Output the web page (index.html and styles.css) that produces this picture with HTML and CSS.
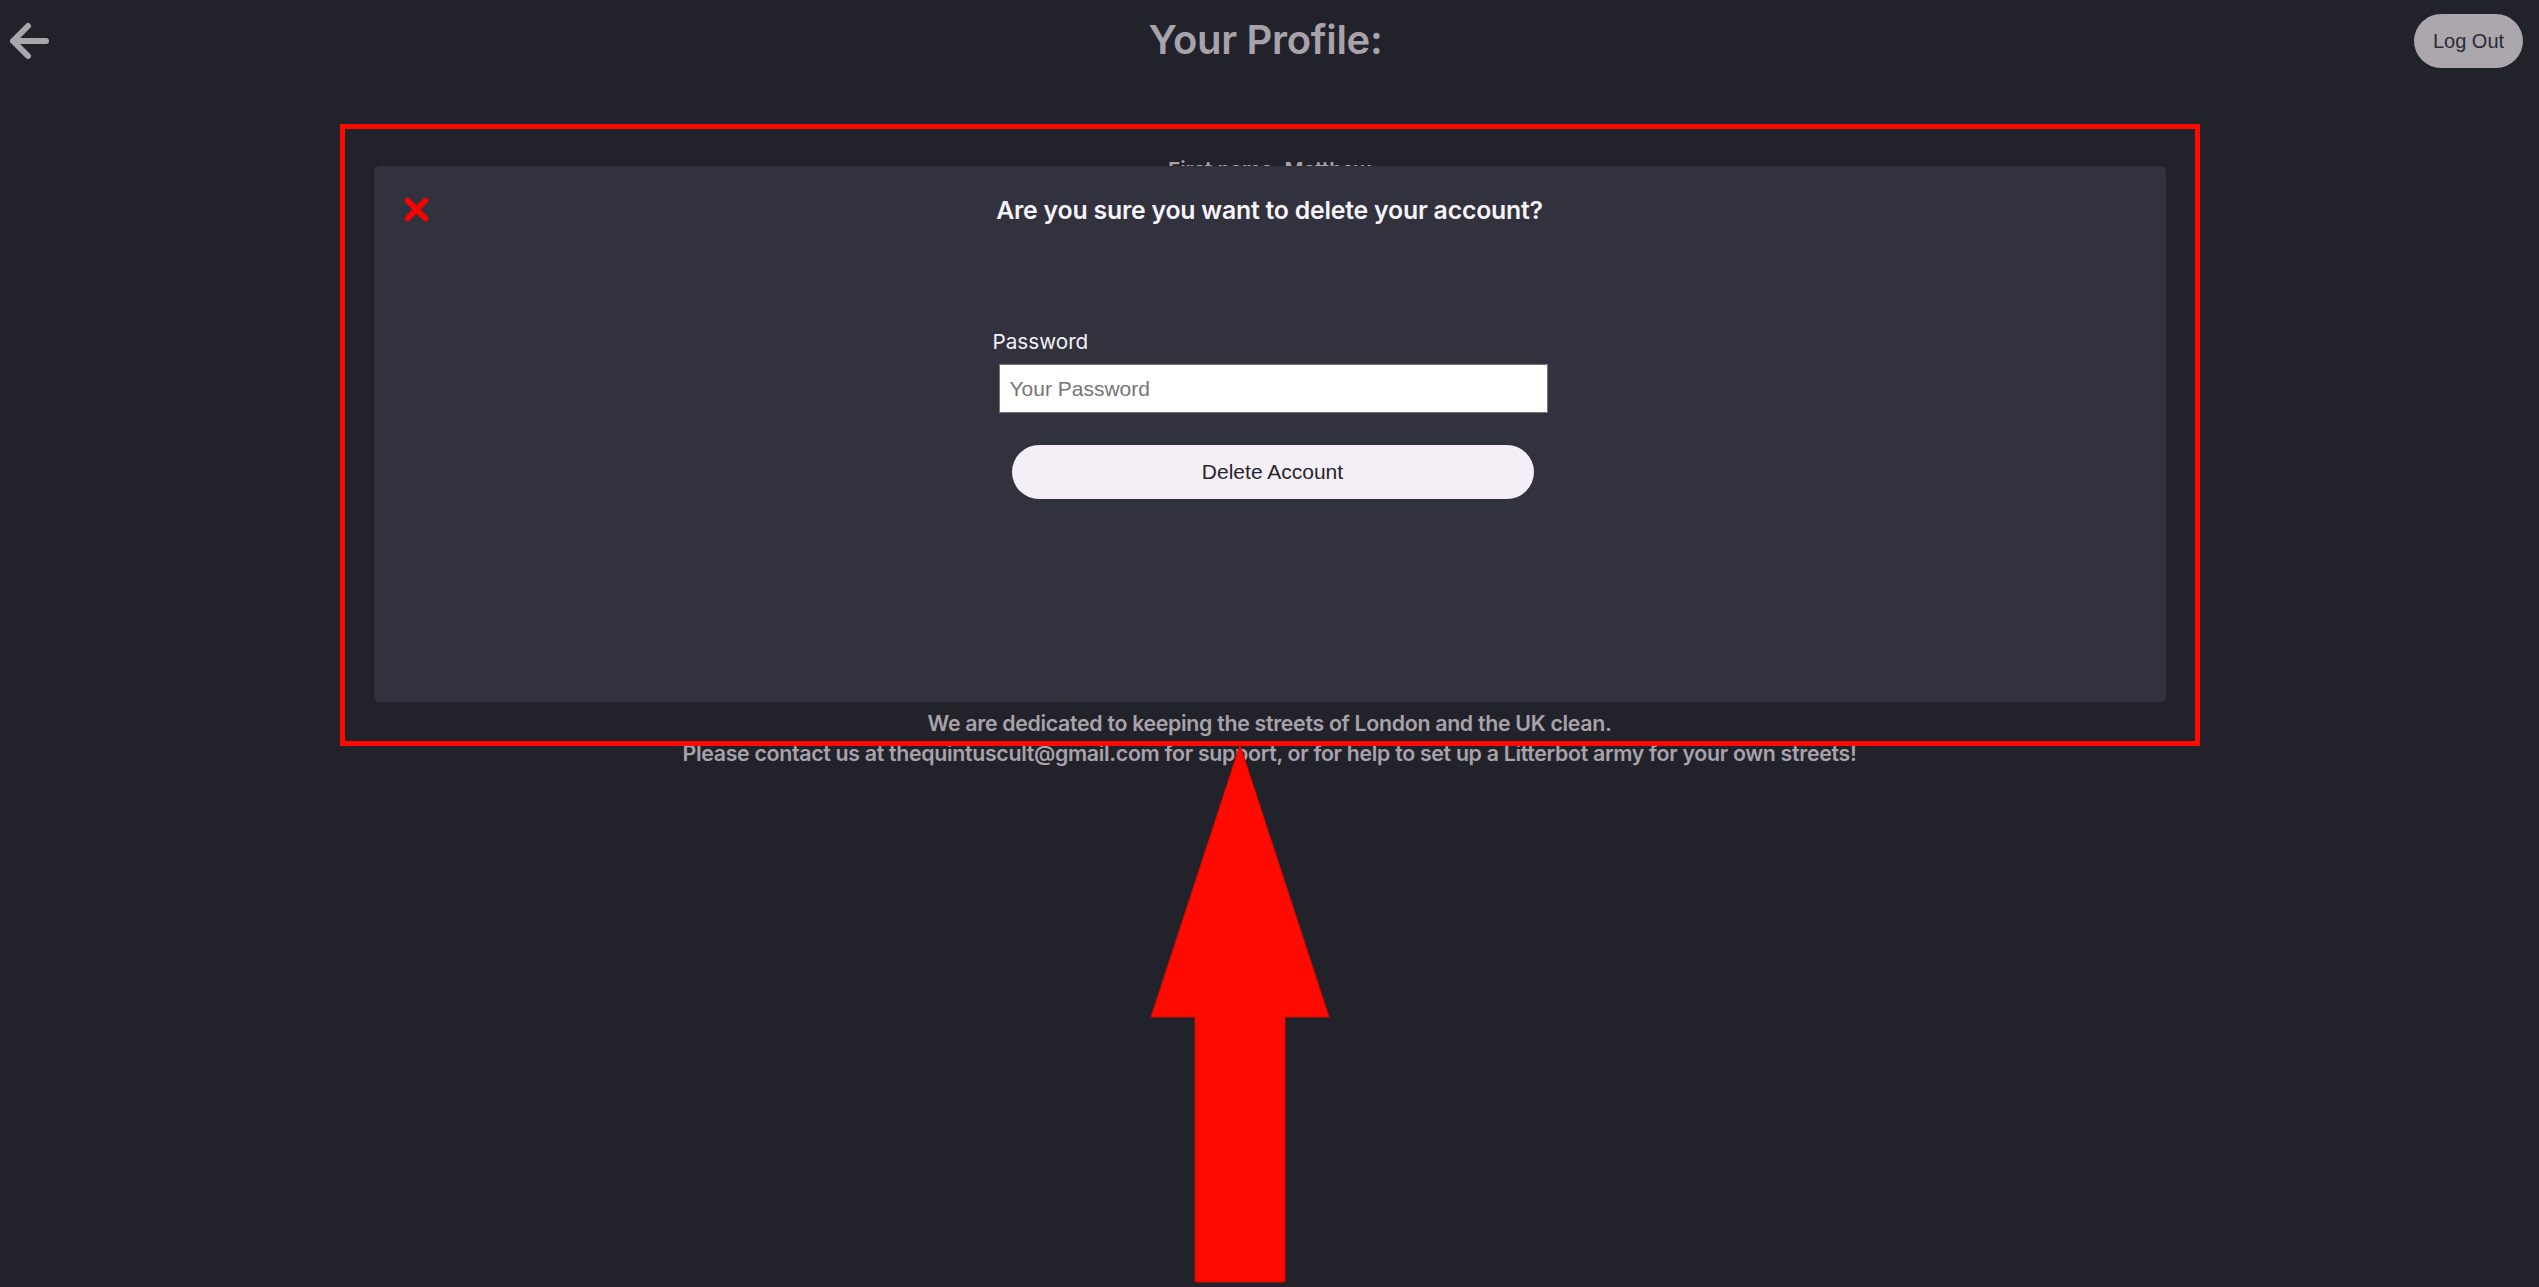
FILE: index.html
```html
<!DOCTYPE html>
<html lang="en">
<head>
<meta charset="utf-8">
<title>Your Profile</title>
<link rel="stylesheet" href="styles.css">
</head>
<body>
  <header class="topbar">
    <a class="back" href="#" aria-label="Back">
      <svg width="42" height="42" viewBox="0 0 42 42"><path d="M38 21 H5 M20 6 L5 21 L20 36" fill="none" stroke="#aba6ac" stroke-width="6" stroke-linecap="round" stroke-linejoin="round"/></svg>
    </a>
    <h1 class="title">Your Profile:</h1>
    <div class="actions"><button class="logout">Log Out</button></div>
  </header>

  <main class="profile">
    <p class="field">First name: Matthew</p>

    <section class="modal">
      <button class="close" aria-label="Close">
        <svg width="25" height="25" viewBox="0 0 25 25"><path d="M3.5 3.5 L21.5 21.5 M21.5 3.5 L3.5 21.5" stroke="#ff0000" stroke-width="5.5" stroke-linecap="round"/></svg>
      </button>
      <h2 class="modal-title">Are you sure you want to delete your account?</h2>
      <form class="delete-form">
        <label class="label" for="pw">Password</label>
        <input class="input" id="pw" type="password" placeholder="Your Password">
        <button class="delete" type="button">Delete Account</button>
      </form>
    </section>
  </main>

  <footer class="footer">
    <p>We are dedicated to keeping the streets of London and the UK clean.</p>
    <p>Please contact us at thequintuscult@gmail.com for support, or for help to set up a Litterbot army for your own streets!</p>
  </footer>

  <div class="annot-box"></div>
  <svg class="annot-arrow" width="180" height="540" viewBox="0 0 180 540"><polygon points="89,0 0,272 44,272 44,537 134,537 134,272 178,272" fill="#ff0a00" stroke="#d40800" stroke-width="1"/></svg>
</body>
</html>
```

FILE: styles.css
```css
* { box-sizing: border-box; }

html, body {
  margin: 0;
  padding: 0;
}

body {
  position: relative;
  min-height: 1287px;
  background: #22222b;
  font-family: Inter, "Noto Sans", sans-serif;
  color: #a8a3aa;
  overflow: hidden;
}

.topbar {
  display: grid;
  grid-template-columns: 1fr auto 1fr;
  height: 80px;
  padding: 0 16px 0 8px;
}

.back {
  display: block;
  width: 42px;
  height: 42px;
  margin-top: 20px;
}

.title {
  margin: 16px 0 0;
  font-size: 40px;
  font-weight: 600;
  line-height: 48px;
  color: #a8a3aa;
  letter-spacing: -0.3px;
}

.actions {
  display: flex;
  justify-content: flex-end;
  align-items: flex-start;
}

.logout {
  margin-top: 14px;
  width: 109px;
  height: 54px;
  border: none;
  border-radius: 27px;
  background: #aca7ad;
  color: #2b2b35;
  font-family: "Liberation Sans", Arial, sans-serif;
  font-size: 20px;
  padding: 0;
}

.profile {
  position: relative;
  width: 1792px;
  height: 550px;
  margin: 78px auto 0;
  text-align: center;
}

.field {
  margin: 0;
  font-size: 20.6px;
  font-weight: 600;
  line-height: 24px;
  color: #a8a3aa;
}

.modal {
  position: absolute;
  top: 8px;
  left: 0;
  right: 0;
  height: 536px;
  background: #31323e;
  border-radius: 6px;
  display: flex;
  flex-direction: column;
  align-items: center;
}

.close {
  position: absolute;
  top: 31px;
  left: 30px;
  width: 25px;
  height: 25px;
  padding: 0;
  border: none;
  background: none;
  line-height: 0;
}

.modal-title {
  margin: 29px 0 0;
  font-size: 24.8px;
  font-weight: 600;
  line-height: 30px;
  color: #f7f4fa;
  letter-spacing: -0.2px;
}

.delete-form {
  width: 554px;
  margin: 105px auto 0;
  display: flex;
  flex-direction: column;
  align-items: flex-start;
  text-align: left;
}

.label {
  font-size: 20.7px;
  line-height: 24px;
  color: #f4f1f6;
}

.input {
  margin: 10px 0 0 6px;
  width: 549px;
  height: 49px;
  border: 1px solid #767676;
  background: #ffffff;
  padding: 0 10px;
  font-family: "Liberation Sans", Arial, sans-serif;
  font-size: 21px;
  color: #222;
}

.input::placeholder {
  color: #757575;
}

.delete {
  margin: 32px 0 0 19px;
  width: 522px;
  height: 54px;
  border: none;
  border-radius: 27px;
  background: #f4eff6;
  color: #25252f;
  font-family: "Liberation Sans", Arial, sans-serif;
  font-size: 21px;
  padding: 0;
}

.footer {
  text-align: center;
  font-size: 21.3px;
  font-weight: 600;
  line-height: 30px;
  color: #a8a3aa;
  letter-spacing: -0.3px;
}

.footer p {
  margin: 0;
}

.annot-box {
  position: absolute;
  left: 340px;
  top: 124px;
  width: 1860px;
  height: 622px;
  border: 5px solid #ff0a00;
  pointer-events: none;
}

.annot-arrow {
  position: absolute;
  left: 1151px;
  top: 745px;
  pointer-events: none;
}
```
